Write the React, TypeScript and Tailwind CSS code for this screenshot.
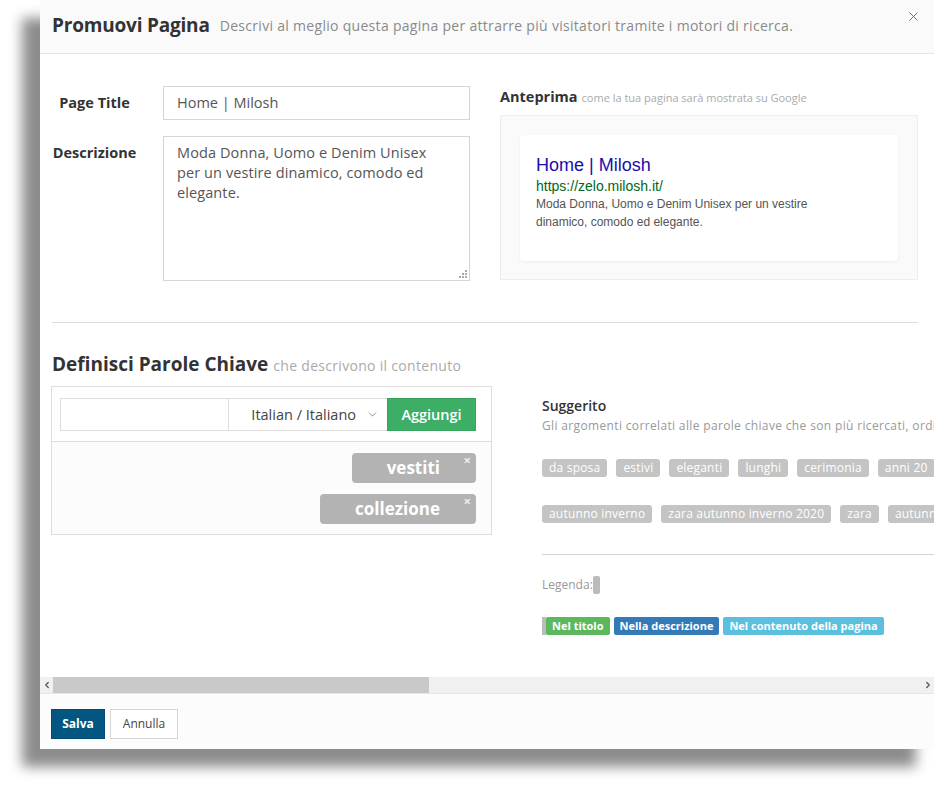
import { ChevronDown, ChevronLeft, ChevronRight, X } from "lucide-react";

const suggestedRows = [
  ["da sposa", "estivi", "eleganti", "lunghi", "cerimonia", "anni 20", "corti"],
  ["autunno inverno", "zara autunno inverno 2020", "zara", "autunno", "primavera"],
];

const keywords = ["vestiti", "collezione"];

export default function App() {
  return (
    <div className="min-h-screen w-full overflow-hidden bg-white font-['Open_Sans',sans-serif] text-[#333]">
      <div className="ml-[40px] flex h-[749px] w-[894px] flex-col bg-white shadow-[-18px_18px_12px_rgba(0,0,0,0.45)]">
        {/* header */}
        <div className="relative flex h-[54px] shrink-0 items-start border-b border-[#e5e5e5] bg-[#fafafa] px-3 pt-[12px]">
          <h2 className="text-[19px] font-bold leading-[26px] tracking-[-0.2px] text-[#333]">Promuovi Pagina</h2>
          <p className="ml-[10px] pt-[4px] text-[14px] leading-[20px] tracking-[0.3px] text-[#8a8a8a]">
            Descrivi al meglio questa pagina per attrarre più visitatori tramite i motori di ricerca.
          </p>
          <button type="button" className="absolute right-[13px] top-[9px] text-[#666]">
            <X size={15} strokeWidth={1.5} />
          </button>
        </div>

        {/* body */}
        <div className="flex-1 overflow-hidden px-3">
          <div className="flex gap-[30px] pt-[32px]">
            <div className="w-[418px] shrink-0">
              <div className="flex items-center">
                <label className="w-[85px] text-center text-[14.5px] font-bold text-[#333]">Page Title</label>
                <div className="ml-[26px] flex h-[34px] w-[307px] items-center border border-[#d5d5d5] px-[13px] text-[14.5px] text-[#555]">
                  Home | Milosh
                </div>
              </div>
              <div className="mt-[16px] flex items-start">
                <label className="w-[85px] pt-[6px] text-center text-[14.5px] font-bold text-[#333]">Descrizione</label>
                <div className="relative ml-[26px] h-[145px] w-[307px] border border-[#d5d5d5] pl-[13px] pr-[30px] pt-[6px] text-[14.5px] leading-[20px] tracking-[0.1px] text-[#555]">
                  Moda Donna, Uomo e Denim Unisex per un vestire dinamico, comodo ed elegante.
                  <svg className="absolute bottom-[2px] right-[2px]" width="8" height="8" viewBox="0 0 8 8">
                    <rect x="6" y="0" width="2" height="2" fill="#aaa" />
                    <rect x="3" y="3" width="2" height="2" fill="#aaa" />
                    <rect x="6" y="3" width="2" height="2" fill="#aaa" />
                    <rect x="0" y="6" width="2" height="2" fill="#aaa" />
                    <rect x="3" y="6" width="2" height="2" fill="#aaa" />
                    <rect x="6" y="6" width="2" height="2" fill="#aaa" />
                  </svg>
                </div>
              </div>
            </div>

            <div className="w-[418px] shrink-0">
              <div className="flex items-baseline">
                <span className="text-[14.5px] font-bold text-[#333]">Anteprima</span>
                <span className="ml-[4px] text-[11px] text-[#aaa]">come la tua pagina sarà mostrata su Google</span>
              </div>
              <div className="mt-[7px] h-[165px] border border-[#eee] bg-[#fafafa] px-[19px] pt-[19px]">
                <div className="h-[126px] rounded-[4px] bg-white px-[16px] pt-[18px] font-['Liberation_Sans',Arial,sans-serif] shadow-[0_1px_3px_rgba(0,0,0,0.06)]">
                  <div className="text-[18px] leading-[24px] text-[#1a0dab]">Home | Milosh</div>
                  <div className="text-[14px] leading-[18px] text-[#006621]">https://zelo.milosh.it/</div>
                  <div className="text-[12px] leading-[18px] text-[#545454]">
                    Moda Donna, Uomo e Denim Unisex per un vestire
                    <br />
                    dinamico, comodo ed elegante.
                  </div>
                </div>
              </div>
            </div>
          </div>

          <hr className="mt-[41px] w-[866px] border-t border-[#dcdcdc]" />

          <div className="mt-[28px] flex items-baseline">
            <h3 className="text-[19px] font-bold leading-[26px] text-[#333]">Definisci Parole Chiave</h3>
            <span className="ml-[5px] text-[14px] tracking-[0.3px] text-[#aaa]">che descrivono il contenuto</span>
          </div>

          <div className="mt-[9px] flex items-start">
            {/* keyword box */}
            <div className="-ml-px w-[441px] shrink-0 border border-[#ddd]">
              <div className="flex border-b border-[#ddd] pb-[10px] pl-2 pr-[15px] pt-[11px]">
                <div className="h-[33px] w-[169px] border border-[#ddd] bg-white" />
                <div className="flex h-[33px] w-[158px] items-center justify-end gap-[10px] border-y border-[#ddd] bg-white pr-[8px] text-[14.5px] text-[#444]">
                  Italian / Italiano
                  <ChevronDown size={13} strokeWidth={1.5} className="text-[#777]" />
                </div>
                <button type="button" className="h-[33px] w-[89px] border border-[#36a45d] bg-[#3cae66] text-[14.5px] font-semibold text-white">
                  Aggiungi
                </button>
              </div>
              <div className="flex flex-col items-end gap-[11px] bg-[#fcfcfc] pb-[10px] pr-[15px] pt-[11px]">
                {keywords.map((k) => (
                  <span
                    key={k}
                    className="relative flex h-[30px] items-center rounded-[4px] bg-[#b3b3b3] pl-[35px] pr-[36px] text-[17px] font-bold text-white"
                  >
                    {k}
                    <span className="absolute right-[5px] top-[1px] text-[13px] font-bold leading-none text-[#eee]">×</span>
                  </span>
                ))}
              </div>
            </div>

            {/* suggestions */}
            <div className="ml-[50px] w-[700px] shrink-0">
              <div className="mt-[9px] text-[14px] font-semibold text-[#333]">Suggerito</div>
              <div className="mt-[1px] whitespace-nowrap text-[12px] tracking-[0.35px] text-[#999]">
                Gli argomenti correlati alle parole chiave che son più ricercati, ordinati per numero di ricerche mensili.
              </div>
              <div className="mt-[24px] flex flex-col gap-[28px]">
                {suggestedRows.map((row, i) => (
                  <div key={i} className="flex gap-[9px]">
                    {row.map((t) => (
                      <span
                        key={t}
                        className="flex h-[18px] items-center whitespace-nowrap rounded-[3px] bg-[#c4c4c4] px-[7px] text-[12px] tracking-[0.2px] text-white"
                      >
                        {t}
                      </span>
                    ))}
                  </div>
                ))}
              </div>
              <hr className="mt-[31px] border-t border-[#d5d5d5]" />
              <div className="mt-[21px] flex items-center text-[12px] text-[#999]">
                Legenda:
                <span className="h-[18px] w-[7px] rounded-[2px] bg-[#bbb]" />
              </div>
              <div className="mt-[23px] flex items-center gap-[4px]">
                <span className="flex items-center">
                  <span className="h-[18px] w-[4px] bg-[#bbb]" />
                  <span className="flex h-[18px] items-center rounded-[2px] bg-[#5cb85c] px-[6px] text-[11px] font-bold text-white">
                    Nel titolo
                  </span>
                </span>
                <span className="flex h-[18px] items-center rounded-[2px] bg-[#337ab7] px-[6px] text-[11px] font-bold text-white">
                  Nella descrizione
                </span>
                <span className="flex h-[18px] items-center rounded-[2px] bg-[#5bc0de] px-[6px] text-[11px] font-bold text-white">
                  Nel contenuto della pagina
                </span>
              </div>
            </div>
          </div>
        </div>

        {/* fake horizontal scrollbar */}
        <div className="flex h-[16px] shrink-0 items-stretch bg-[#f0f0f0]">
          <div className="flex w-[13px] items-center justify-center text-[#555]">
            <ChevronLeft size={10} strokeWidth={3} />
          </div>
          <div className="flex flex-1">
            <div className="w-[376px] bg-[#c9c9c9]" />
          </div>
          <div className="flex w-[13px] items-center justify-center text-[#555]">
            <ChevronRight size={10} strokeWidth={3} />
          </div>
        </div>

        {/* footer */}
        <div className="flex h-[56px] shrink-0 items-start gap-[5px] border-t border-[#e6e6e6] bg-[#fcfcfc] px-[11px] pt-[15px]">
          <button type="button" className="h-[30px] w-[54px] border border-[#024a6f] bg-[#03567f] text-[12px] font-bold text-white">
            Salva
          </button>
          <button type="button" className="h-[30px] w-[68px] border border-[#d5d5d5] bg-white text-[12px] text-[#444]">
            Annulla
          </button>
        </div>
      </div>
    </div>
  );
}
